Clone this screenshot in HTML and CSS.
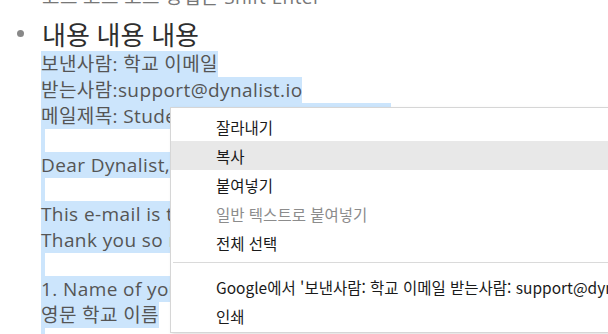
FILE: index.html
```html
<!DOCTYPE html>
<html lang="ko">

<head>
    <meta charset="UTF-8">
    <meta name="viewport" content="width=device-width, initial-scale=1.0">
    <title>Dynalist</title>
    <link rel="stylesheet" href="styles.css">
</head>

<body>
    <div class="page">
        <div class="prev-note">코드 코드 코드 방법은 Shift Enter</div>

        <div class="item">
            <div class="bullet-col"><span class="bullet"></span></div>
            <div class="item-body">
                <div class="title">내용 내용 내용</div>
                <div class="note">
                    <div class="line"><span class="sel">보낸사람: 학교 이메일</span></div>
                    <div class="line"><span class="sel">받는사람:support@dynalist.io</span></div>
                    <div class="line"><span class="sel">메일제목: Student Discount Application</span></div>
                    <div class="line blank"><span class="sel"></span></div>
                    <div class="line"><span class="sel">Dear Dynalist,</span></div>
                    <div class="line blank"><span class="sel"></span></div>
                    <div class="line"><span class="sel">This e-mail is to request a student discount.</span></div>
                    <div class="line"><span class="sel">Thank you so much for your help.</span></div>
                    <div class="line blank"><span class="sel"></span></div>
                    <div class="line"><span class="sel">1. Name of your school:</span></div>
                    <div class="line"><span class="sel">영문 학교 이름</span></div>
                    <div class="line blank"><span class="sel"></span></div>
                </div>
            </div>
        </div>
    </div>

    <div class="context-menu">
        <div class="menu-item">잘라내기</div>
        <div class="menu-item hover">복사</div>
        <div class="menu-item">붙여넣기</div>
        <div class="menu-item disabled">일반 텍스트로 붙여넣기</div>
        <div class="menu-item">전체 선택</div>
        <div class="menu-sep"></div>
        <div class="menu-item">Google에서 '보낸사람: 학교 이메일 받는사람: support@dynalist.io 메일제목: Student...' 검색</div>
        <div class="menu-item">인쇄</div>
    </div>
</body>

</html>
```

FILE: styles.css
```css
html,
body {
    margin: 0;
    padding: 0;
    height: 100%;
    overflow: hidden;
    background: #ffffff;
}

body {
    font-family: "Open Sans", "Noto Sans CJK KR", sans-serif;
    color: #333;
}

.page {
    position: relative;
}

.prev-note {
    padding-left: 42px;
    margin-top: -15px;
    font-size: 19px;
    line-height: 25px;
    letter-spacing: 0.4px;
    color: #777;
    white-space: nowrap;
}

.item {
    display: flex;
    margin-top: 8px;
}

.bullet-col {
    width: 41px;
    flex-shrink: 0;
}

.bullet {
    display: block;
    width: 7px;
    height: 7px;
    margin: 12px 0 0 17px;
    border-radius: 50%;
    background-color: #888;
}

.item-body {
    flex: 1;
    min-width: 0;
}

.title {
    font-size: 26px;
    line-height: 31px;
    padding: 2px 0 0 1px;
    color: #2e2e2e;
    white-space: nowrap;
}

.note {
    font-size: 19px;
    letter-spacing: 0.4px;
    color: #555;
}

.line {
    height: 26px;
    line-height: 26px;
    white-space: nowrap;
}

.sel {
    display: inline-block;
    height: 26px;
    background-color: #cce5fc;
}

.line.blank {
    height: 23px;
}

.line.blank .sel {
    width: 4px;
    height: 23px;
}

.context-menu {
    position: absolute;
    top: 107px;
    left: 170px;
    width: 480px;
    padding: 4px 0 2px;
    background-color: #ffffff;
    border: 1px solid #d6d6d6;
    box-shadow: 2px 2px 4px rgba(0, 0, 0, 0.12);
    font-family: "Noto Sans CJK KR", sans-serif;
    font-size: 15.5px;
    color: #1a1a1a;
}

.menu-item {
    height: 27px;
    line-height: 27px;
    padding: 2px 0 0 45px;
    white-space: nowrap;
    overflow: hidden;
}

.menu-item.hover {
    background-color: #e8e8e8;
}

.menu-item.disabled {
    color: #8c8c8c;
}

.menu-sep {
    height: 1px;
    margin: 5px 0 9px 2px;
    background-color: #dadada;
}
```
